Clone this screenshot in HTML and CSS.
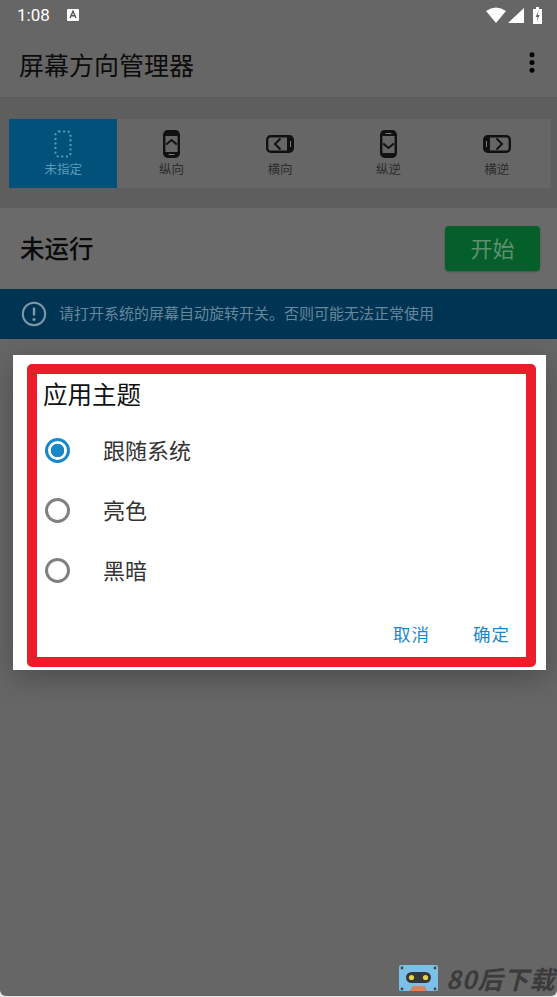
FILE: index.html
```html
<!DOCTYPE html>
<html lang="en">

<head>
    <meta charset="UTF-8">
    <meta name="viewport" content="width=device-width, initial-scale=1.0">
    <title>屏幕方向管理器</title>
    <link rel="stylesheet" href="styles.css">
</head>

<body>
    <div class="page">
        <div class="status-bar">
            <span class="clock">1:08</span>
            <svg class="status-a" width="12" height="12" viewBox="0 0 12 12">
                <rect width="12" height="12" rx="1" fill="#fff" />
                <path d="M3 9 6 2.2l3 6.8M4.2 6.8h3.6" fill="none" stroke="#555" stroke-width="1.4" />
            </svg>
            <span class="status-right">
                <svg width="20" height="16" viewBox="0 0 20 16"><path d="M0 4Q10-3 20 4L10 16z" fill="#fff" /></svg>
                <svg width="16" height="15" viewBox="0 0 16 15"><path d="M16 0V15H0z" fill="#fff" /></svg>
                <svg class="battery" width="9" height="17" viewBox="0 0 9 17">
                    <path d="M3 0h3v2h3V17H0V2h3z" fill="#fff" />
                    <path d="M5.4 4 2.6 10h2L3.8 14.5 6.6 8h-2z" fill="#666" />
                </svg>
            </span>
        </div>
        <header class="app-bar">
            <h1 class="app-title">屏幕方向管理器</h1>
            <svg class="more" width="6" height="21" viewBox="0 0 6 21">
                <circle cx="3" cy="2.7" r="2.5" />
                <circle cx="3" cy="10.5" r="2.5" />
                <circle cx="3" cy="18.3" r="2.5" />
            </svg>
        </header>

        <section class="modes">
            <div class="mode-strip">
                <div class="mode mode-active">
                    <svg width="18" height="28" viewBox="0 0 18 28">
                        <rect x="1.5" y="1.5" width="15" height="25" rx="3" fill="none" stroke="#5f9ab8" stroke-width="2" stroke-dasharray="2 2.6" />
                    </svg>
                    <span>未指定</span>
                </div>
                <div class="mode">
                    <svg width="17" height="28" viewBox="0 0 17 28">
                        <rect x="1.2" y="1.2" width="14.6" height="25.6" rx="3.5" fill="none" stroke="#111" stroke-width="2.4" />
                        <path d="M1 6V4a3 3 0 0 1 3-3h9a3 3 0 0 1 3 3v2zM1 22v2a3 3 0 0 0 3 3h9a3 3 0 0 0 3-3v-2z" fill="#111" />
                        <path d="M3.2 14.5l5.3-4.5 5.3 4.5" fill="none" stroke="#111" stroke-width="2" />
                        <path d="M5.5 24.5h6" stroke="#777" stroke-width="1" />
                    </svg>
                    <span>纵向</span>
                </div>
                <div class="mode">
                    <svg class="mode-wide" width="28" height="18" viewBox="0 0 28 18">
                        <rect x="1.2" y="1.2" width="25.6" height="15.6" rx="3.5" fill="none" stroke="#111" stroke-width="2.4" />
                        <path d="M21 1h3a3 3 0 0 1 3 3v10a3 3 0 0 1-3 3h-3z" fill="#111" />
                        <path d="M14.5 3.5 9 9l5.5 5.5" fill="none" stroke="#111" stroke-width="2" />
                        <path d="M24.5 6v6" stroke="#777" stroke-width="1" />
                    </svg>
                    <span>横向</span>
                </div>
                <div class="mode">
                    <svg width="17" height="28" viewBox="0 0 17 28">
                        <rect x="1.2" y="1.2" width="14.6" height="25.6" rx="3.5" fill="none" stroke="#111" stroke-width="2.4" />
                        <path d="M1 6V4a3 3 0 0 1 3-3h9a3 3 0 0 1 3 3v2zM1 24a3 3 0 0 0 3 3h9a3 3 0 0 0 3-3v-1H1z" fill="#111" />
                        <path d="M3.2 13.5l5.3 4.5 5.3-4.5" fill="none" stroke="#111" stroke-width="2" />
                        <path d="M5.5 3.5h6" stroke="#777" stroke-width="1" />
                    </svg>
                    <span>纵逆</span>
                </div>
                <div class="mode">
                    <svg class="mode-wide" width="28" height="18" viewBox="0 0 28 18">
                        <rect x="1.2" y="1.2" width="25.6" height="15.6" rx="3.5" fill="none" stroke="#111" stroke-width="2.4" />
                        <path d="M7 1H4a3 3 0 0 0-3 3v10a3 3 0 0 0 3 3h3z" fill="#111" />
                        <path d="M13.5 3.5 19 9l-5.5 5.5" fill="none" stroke="#111" stroke-width="2" />
                        <path d="M3.5 6v6" stroke="#777" stroke-width="1" />
                    </svg>
                    <span>横逆</span>
                </div>
            </div>
        </section>

        <section class="run-row">
            <span class="run-state">未运行</span>
            <button class="start-button">开始</button>
        </section>

        <div class="notice">
            <svg width="26" height="26" viewBox="0 0 26 26">
                <circle cx="13" cy="13" r="11.2" fill="none" stroke="#7f98a8" stroke-width="2" />
                <path d="M13 6.5v8" stroke="#7f98a8" stroke-width="2.4" />
                <circle cx="13" cy="18.5" r="1.5" fill="#7f98a8" />
            </svg>
            <span class="notice-text">请打开系统的屏幕自动旋转开关。否则可能无法正常使用</span>
        </div>

        <div class="dialog">
            <div class="dialog-frame">
                <h2 class="dialog-title">应用主题</h2>
                <div class="option">
                    <span class="radio radio-on"></span>
                    <span class="option-label">跟随系统</span>
                </div>
                <div class="option">
                    <span class="radio"></span>
                    <span class="option-label">亮色</span>
                </div>
                <div class="option">
                    <span class="radio"></span>
                    <span class="option-label">黑暗</span>
                </div>
                <div class="dialog-actions">
                    <span>取消</span>
                    <span>确定</span>
                </div>
            </div>
        </div>

        <div class="watermark">
            <svg width="39" height="27" viewBox="0 0 39 27">
                <path d="M2 0H37a2 2 0 0 1 2 2V25a2 2 0 0 1-2 1H28l-3-5H14l-3 5H2a2 2 0 0 1-2-1V2a2 2 0 0 1 2-2z" fill="#7cc0e8" />
                <rect x="7" y="7" width="25" height="11" rx="5.5" fill="#33383d" />
                <circle cx="12.5" cy="12.5" r="2.6" fill="#e8d24a" />
                <circle cx="26.5" cy="12.5" r="2.6" fill="#e8d24a" />
                <path d="M11 26l3-5h11l3 5z" fill="#e2805a" />
                <circle cx="3" cy="3" r="1.4" fill="#444" />
                <circle cx="36" cy="3" r="1.4" fill="#444" />
                <circle cx="3" cy="24" r="1.4" fill="#444" />
                <circle cx="36" cy="24" r="1.4" fill="#444" />
            </svg>
            <span>80后下载</span>
        </div>
    </div>
</body>

</html>
```

FILE: styles.css
```css
* {
    box-sizing: border-box;
}

body {
    margin: 0;
    font-family: "Noto Sans CJK SC", "Noto Sans", sans-serif;
    background-color: #e8e8e8;
}

.page {
    position: relative;
    width: 557px;
    height: 996px;
    overflow: hidden;
    border-radius: 0 0 6px 6px;
    background-color: #666;
}

.status-bar {
    display: flex;
    align-items: center;
    height: 30px;
    padding: 0 15px 0 17px;
    background-color: #666;
    color: #fff;
}

.clock {
    font-family: Roboto, sans-serif;
    font-size: 17px;
}

.status-a {
    margin-left: 17px;
}

.status-right {
    display: flex;
    align-items: center;
    gap: 2px;
    margin-left: auto;
}

.battery {
    margin-left: 7px;
}

.app-bar {
    display: flex;
    align-items: center;
    justify-content: space-between;
    height: 68px;
    padding: 0 22px 0 19px;
    background-color: #666;
    border-bottom: 1px solid #5c5c5c;
}

.app-title {
    margin: 0;
    font-size: 25px;
    font-weight: 400;
    color: #0c0c0c;
}

.more {
    margin-bottom: 3px;
}

.modes {
    height: 110px;
    padding: 21px 6px 20px 9px;
    background-color: #5e5e5e;
}

.mode-strip {
    display: grid;
    grid-template-columns: repeat(5, 1fr);
    height: 69px;
    background-color: #666;
}

.mode {
    display: flex;
    flex-direction: column;
    align-items: center;
    justify-content: center;
    height: 69px;
    padding-top: 1px;
    font-size: 12.5px;
    line-height: 18px;
    color: #2c2c2c;
}

.mode svg {
    display: block;
    margin-bottom: 2px;
}

.mode .mode-wide {
    margin: 5px 0 7px;
}

.mode-active {
    background-color: #00527a;
    color: #5f9ab8;
}

.run-row {
    display: flex;
    align-items: center;
    justify-content: space-between;
    height: 81px;
    padding: 0 17px 0 20px;
    background-color: #6a6a6a;
}

.run-state {
    padding-bottom: 2px;
    font-size: 24.5px;
    font-weight: 500;
    color: #0a0a0a;
}

.start-button {
    width: 95px;
    height: 45px;
    padding: 0 0 3px;
    border: none;
    border-radius: 4px;
    background-color: #045f2a;
    font-family: inherit;
    font-size: 22px;
    color: #5f8f70;
    box-shadow: 0 1px 2px rgba(0, 0, 0, 0.25);
}

.notice {
    display: flex;
    align-items: center;
    gap: 12px;
    height: 50px;
    padding: 0 21px;
    background-color: #003453;
    font-size: 15px;
    color: #67879b;
}

.notice-text {
    padding-bottom: 4px;
}

.dialog {
    position: absolute;
    left: 13px;
    top: 355px;
    width: 533px;
    height: 315px;
    padding: 9px 10px 3px 14px;
    background-color: #fff;
    box-shadow: 0 8px 28px rgba(0, 0, 0, 0.25);
}

.dialog-frame {
    height: 303px;
    padding: 0 10px;
    border: 10px solid #ed1c2a;
    border-radius: 5px;
    background-color: #fff;
}

.dialog-title {
    margin: 0 0 0 -4px;
    font-size: 24.5px;
    font-weight: 400;
    line-height: 40px;
    color: #111;
}

.option {
    display: flex;
    align-items: center;
    height: 60px;
    margin-left: -2px;
    font-size: 22px;
    color: #333;
}

.option:first-of-type {
    margin-top: 6px;
}

.option-label {
    padding-bottom: 2px;
}

.radio {
    flex: none;
    width: 25px;
    height: 25px;
    margin-right: 33px;
    border: 3px solid #808080;
    border-radius: 50%;
}

.radio-on {
    border-color: #1787c8;
    background: radial-gradient(circle, #1787c8 0 6.5px, #fff 7px);
}

.dialog-actions {
    display: flex;
    justify-content: flex-end;
    gap: 43px;
    padding: 21px 6px 0 0;
    font-size: 17.5px;
    color: #1787c8;
    letter-spacing: 1px;
}

.watermark {
    position: absolute;
    left: 399px;
    top: 964px;
    display: flex;
    align-items: center;
    gap: 8px;
    white-space: nowrap;
    font-size: 25px;
    font-weight: 700;
    font-style: italic;
    letter-spacing: 1px;
    line-height: 28px;
    color: #3b3b3b;
}

.watermark svg {
    flex: none;
}
```
